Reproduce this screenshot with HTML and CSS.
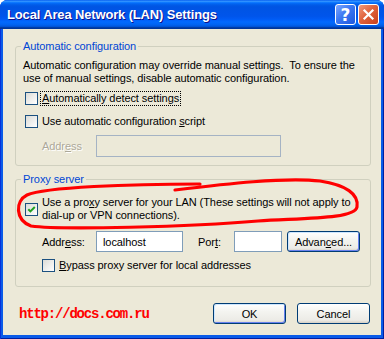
FILE: index.html
```html
<!DOCTYPE html>
<html lang="en">
  <head>
    <meta charset="UTF-8" />
    <title>Local Area Network (LAN) Settings</title>
    <link rel="stylesheet" href="styles.css">
  </head>
  <body>
    <div class="window">
      <div class="titlebar">
        <span class="title">Local Area Network (LAN) Settings</span>
        <div class="title-buttons">
          <span class="tb-btn help">?</span>
          <span class="tb-btn close">
            <svg width="13" height="13" viewBox="0 0 13 13"><path d="M2.5 2.5 L10.5 10.5 M10.5 2.5 L2.5 10.5" stroke="#fff" stroke-width="2.2" stroke-linecap="square"/></svg>
          </span>
        </div>
      </div>

      <div class="client">
        <fieldset class="group">
          <legend>Automatic configuration</legend>
          <p class="note">Automatic configuration may override manual settings.&nbsp; To ensure the<br>use of manual settings, disable automatic configuration.</p>
          <div class="check-row first">
            <span class="check"></span>
            <span class="label focused"><u>A</u>utomatically detect settings</span>
          </div>
          <div class="check-row second">
            <span class="check"></span>
            <span class="label">Use automatic configuration <u>s</u>cript</span>
          </div>
          <div class="field-row script-row">
            <span class="field-label disabled">Addr<u>e</u>ss</span>
            <span class="edit disabled wide"></span>
          </div>
        </fieldset>

        <fieldset class="group proxy">
          <legend>Proxy server</legend>
          <div class="check-row multi">
            <span class="check checked">
              <svg width="11" height="11" viewBox="0 0 11 11"><path d="M2.3 5.2 L4.4 7.4 L8.8 3" fill="none" stroke="#21a121" stroke-width="2"/></svg>
            </span>
            <span class="label">Use a pro<u>x</u>y server for your LAN (These settings will not apply to<br>dial-up or VPN connections).</span>
          </div>
          <div class="field-row proxy-row">
            <span class="field-label">Addr<u>e</u>ss:</span>
            <span class="edit address">localhost</span>
            <span class="field-label port-label">Por<u>t</u>:</span>
            <span class="edit port"></span>
            <span class="btn default advanced">Advan<u>c</u>ed...</span>
          </div>
          <div class="check-row bypass">
            <span class="check"></span>
            <span class="label"><u>B</u>ypass proxy server for local addresses</span>
          </div>
        </fieldset>

        <div class="footer">
          <span class="site-link">http://docs.com.ru</span>
          <span class="btn default">OK</span>
          <span class="btn">Cancel</span>
        </div>
      </div>

      <!-- red hand-drawn marker round the proxy option -->
      <svg class="marker" width="384" height="339" viewBox="0 0 384 339">
        <path d="M200 184 C130 184 45 187 27 195 C15 201 15 220 31 226 C60 230 190 227 258 221 C305 218 355 219 357 207 C359 194 346 185 320 181 C285 177 225 184 175 190" fill="none" stroke="#ff0000" stroke-width="3.2" stroke-linecap="round"/>
      </svg>
    </div>
  </body>
</html>
```

FILE: styles.css
```css
:root {
  --dialog-bg: #ece9d8;
  --frame-blue: #0a5be8;
  --group-line: #d0d0bf;
  --legend-blue: #0046d5;
  --edit-border: #7f9db9;
}
* { box-sizing: border-box; }
body { margin: 0; background: #fff; font-family: "Liberation Sans", Arial, sans-serif; font-size: 11px; color: #000; letter-spacing: -0.08px; }

.window { position: relative; width: 384px; height: 339px; display: flex; flex-direction: column; background: var(--frame-blue); border-radius: 8px 8px 0 0; box-shadow: inset 1px 0 #0831d9, inset -1px 0 #001ea0, inset 0 -1px #001ea0; }

.titlebar { height: 29px; flex: none; display: flex; align-items: center; padding: 0 5px 0 7px; border-radius: 7px 7px 0 0;
  background: linear-gradient(to bottom, #0058ee 0%, #3593ff 4%, #288eff 6%, #127dff 8%, #036ffc 10%, #0262ee 14%, #0057e5 20%, #0054e3 24%, #0055eb 56%, #005bf5 66%, #026afe 76%, #0062ef 86%, #0052d6 92%, #0040ab 94%, #003092 100%); }
.title { flex: 1; color: #fff; font-weight: bold; font-size: 13px; letter-spacing: -0.15px; text-shadow: 1px 1px #0f1089; }
.title-buttons { display: flex; gap: 2px; }
.tb-btn { width: 21px; height: 21px; border: 1px solid #fff; border-radius: 3px; display: flex; align-items: center; justify-content: center; color: #fff; font: bold 17px "DejaVu Sans", sans-serif; }
.tb-btn.help { background: linear-gradient(135deg, #7ea6ff 0%, #3c78f2 45%, #1d58de 100%); }
.tb-btn.close { background: linear-gradient(135deg, #f19a7d 0%, #e0633d 45%, #c8401c 100%); }

.client { flex: 1; margin: 0 3px 4px; background: var(--dialog-bg); padding: 11px 10px 0 12px; display: flex; flex-direction: column; }

.group { margin: 0; padding: 0 7px 8px 7px; border: 1px solid var(--group-line); border-radius: 3px; }
.group legend { padding: 0 2px; margin-left: -2px; line-height: 13px; color: var(--legend-blue); }
.group.proxy { margin-top: 7px; padding-bottom: 13px; }

.note { margin: 6px 0 0; line-height: 13px; white-space: nowrap; }

.check-row { display: flex; align-items: center; margin-left: 2px; height: 15px; }
.check-row.first { margin-top: 6px; }
.check-row.second { margin-top: 8px; }
.check-row.multi { margin-top: 10px; height: 26px; }
.check-row.bypass { margin-top: 6px; margin-left: 19px; }
.check { width: 13px; height: 13px; flex: none; border: 1px solid #1c5180; background: linear-gradient(135deg, #dcdcd7 0%, #fff 100%); display: flex; }
.label { margin-left: 2px; padding: 0 1px; line-height: 13px; white-space: nowrap; border: 1px solid transparent; }
.label.focused { border: 1px dotted #000; }

.field-row { display: flex; align-items: center; }
.script-row { margin-top: 6px; height: 22px; }
.proxy-row { margin-top: 9px; height: 21px; }
.field-label { margin-left: 19px; width: 54px; flex: none; white-space: nowrap; }
.field-label.disabled { color: #aca899; text-shadow: 1px 1px #fff; }
.field-label.port-label { margin-left: 15px; width: 36px; }

.edit { height: 100%; border: 1px solid var(--edit-border); background: #fff; padding: 0 0 0 6px; display: flex; align-items: center; }
.edit.disabled { border-color: #a5b3c4; background: var(--dialog-bg); }
.edit.wide { width: 185px; }
.edit.address { width: 87px; }
.edit.port { width: 48px; }

.btn { width: 73px; height: 21px; flex: none; display: flex; align-items: center; justify-content: center; border: 1px solid #003c74; border-radius: 3px; background: linear-gradient(to bottom, #fff 0%, #f4f4f0 40%, #ecebe6 85%, #d6d0c5 100%); }
.btn.default { box-shadow: inset 1px 1px #cee7ff, inset -1px -1px #6982ee; }
.btn.advanced { margin-left: 5px; height: 21px; }

.footer { display: flex; align-items: center; margin-top: 16px; }
.site-link { flex: 1; margin-left: 4px; color: #ff0000; font: bold 14px "Liberation Mono", monospace; letter-spacing: -1.2px; }
.footer .btn + .btn { margin-left: 11px; margin-right: 1px; }

.marker { position: absolute; left: 0; top: 0; pointer-events: none; }
```
